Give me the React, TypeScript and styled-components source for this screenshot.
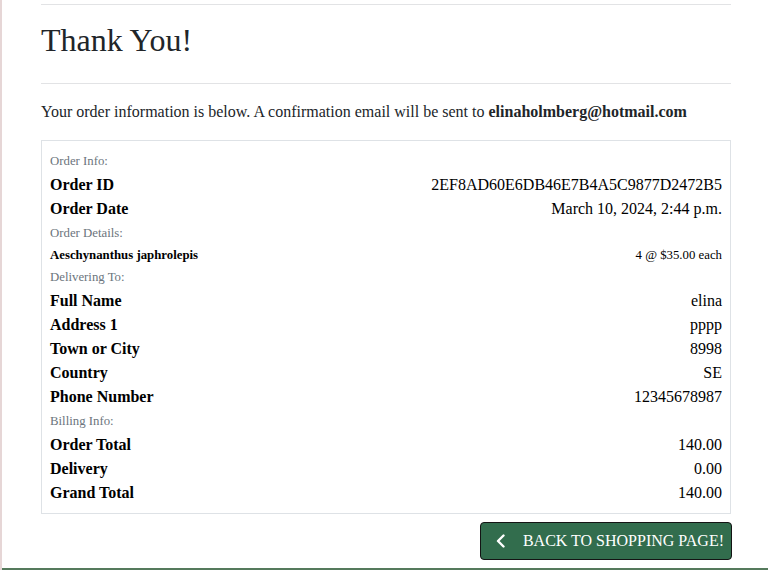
import React from "react";
import styled, { createGlobalStyle } from "styled-components";

const Global = createGlobalStyle`
  html, body { margin: 0; padding: 0; background: #fff; }
  body { font-family: "Liberation Serif", "Times New Roman", serif; color: #212529; }
`;

const Page = styled.div`
  min-height: 570px;
  box-sizing: border-box;
  border-left: 2px solid #e6d6d6;
  display: flex;
  flex-direction: column;
`;

const Main = styled.main`
  padding: 4px 0 0 39px;
  width: 690px;
  display: flex;
  flex-direction: column;
`;

const Rule = styled.hr<{ $after: number }>`
  margin: 0 0 ${(p) => p.$after}px;
  border: 0;
  border-top: 1px solid #e2e3e5;
`;

const Title = styled.h1`
  margin: 0 0 24px;
  font-size: 32px;
  font-weight: 400;
  line-height: 1.2;
  color: #212529;
`;

const Lead = styled.p`
  margin: 0 0 16px;
  font-size: 16px;
  line-height: 24px;
  color: #212529;
  white-space: nowrap;
  strong { font-weight: 700; }
`;

const Card = styled.section`
  border: 1px solid #dee2e6;
  padding: 8px;
  display: flex;
  flex-direction: column;
`;

const Caption = styled.div`
  height: 24px;
  display: flex;
  align-items: center;
  font-size: 12.8px;
  color: #6c757d;
`;

const Row = styled.div<{ $small?: boolean }>`
  display: flex;
  justify-content: space-between;
  align-items: center;
  height: ${(p) => (p.$small ? 20 : 24)}px;
  font-size: ${(p) => (p.$small ? 12.8 : 16)}px;
  color: #000;
`;

const Label = styled.span`
  font-weight: 700;
`;

const Value = styled.span<{ $small?: boolean }>`
  text-align: right;
  font-size: ${(p) => (p.$small ? "12.8px" : "inherit")};
`;

const Actions = styled.div`
  display: flex;
  justify-content: flex-end;
  margin: 8px -1px 8px 0;
`;

const BackButton = styled.a`
  display: inline-flex;
  align-items: center;
  gap: 18px;
  height: 38px;
  box-sizing: border-box;
  padding: 0 7px 0 15px;
  background: #326d4d;
  border: 1px solid #141414;
  border-radius: 4px;
  color: #fff;
  font-size: 16px;
  text-transform: uppercase;
  text-decoration: none;
  white-space: nowrap;
  cursor: pointer;
`;

const Footer = styled.footer`
  border-top: 2px solid #557a5c;
  flex: 1;
`;

const Chevron = () => (
  <svg width="9" height="14" viewBox="0 0 9 14" aria-hidden="true">
    <polyline
      points="7.5,1.5 2,7 7.5,12.5"
      fill="none"
      stroke="#fff"
      strokeWidth="2.4"
      strokeLinecap="round"
      strokeLinejoin="round"
    />
  </svg>
);

type Line = { label: string; value: string };

const delivery: Line[] = [
  { label: "Full Name", value: "elina" },
  { label: "Address 1", value: "pppp" },
  { label: "Town or City", value: "8998" },
  { label: "Country", value: "SE" },
  { label: "Phone Number", value: "12345678987" },
];

const billing: Line[] = [
  { label: "Order Total", value: "140.00" },
  { label: "Delivery", value: "0.00" },
  { label: "Grand Total", value: "140.00" },
];

const Rows = ({ items }: { items: Line[] }) => (
  <>
    {items.map((i) => (
      <Row key={i.label}>
        <Label>{i.label}</Label>
        <Value>{i.value}</Value>
      </Row>
    ))}
  </>
);

export default function App() {
  return (
    <>
      <Global />
      <Page>
        <Main>
          <Rule $after={16} />
          <Title>Thank You!</Title>
          <Rule $after={16} />
          <Lead>
            Your order information is below. A confirmation email will be sent to{" "}
            <strong>elinaholmberg@hotmail.com</strong>
          </Lead>
          <Card>
            <Caption>Order Info:</Caption>
            <Rows
              items={[
                { label: "Order ID", value: "2EF8AD60E6DB46E7B4A5C9877D2472B5" },
                { label: "Order Date", value: "March 10, 2024, 2:44 p.m." },
              ]}
            />
            <Caption>Order Details:</Caption>
            <Row $small>
              <Label>Aeschynanthus japhrolepis</Label>
              <Value $small>4 @ $35.00 each</Value>
            </Row>
            <Caption>Delivering To:</Caption>
            <Rows items={delivery} />
            <Caption>Billing Info:</Caption>
            <Rows items={billing} />
          </Card>
          <Actions>
            <BackButton>
              <Chevron />
              <span>Back to Shopping Page!</span>
            </BackButton>
          </Actions>
        </Main>
        <Footer />
      </Page>
    </>
  );
}
